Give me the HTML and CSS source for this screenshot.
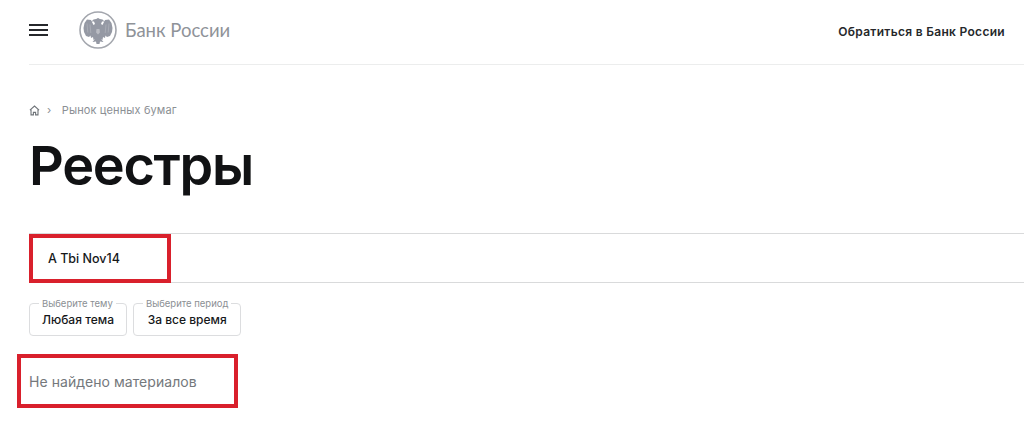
FILE: index.html
```html
<!DOCTYPE html>
<html lang="ru">
<head>
    <meta charset="UTF-8">
    <meta name="viewport" content="width=device-width, initial-scale=1.0">
    <title>Реестры</title>
    <link rel="stylesheet" href="styles.css">
</head>
<body>
    <div class="page">
        <header class="header">
            <div class="burger"><span></span><span></span><span></span></div>
            <div class="logo">
                <svg class="logo-mark" viewBox="0 0 38 38" width="38" height="38">
                    <circle cx="19" cy="19" r="18" fill="none" stroke="#a3a6ad" stroke-width="1.6"/>
                    <g id="half">
                        <path fill="#9599a4" d="M19.500 7L17 8 14.500 8.500 12.500 10.500 15 10.500 16 13 14.500 14 12 9 8 8.500 5.500 12 4.500 17 5 21 7 25 10 26 11.500 24.500 12 27 14 26 14.500 29 16 28 13.500 31 17 30.500 17.500 33 19.500 33z"/>
                        <path fill="none" stroke="#fff" stroke-opacity=".3" stroke-width=".6" d="M8 12.500l.8 9M11 13.500l.8 8.500"/>
                    </g>
                    <use href="#half" transform="matrix(-1 0 0 1 38 0)"/>
                    <path fill="#fff" fill-opacity=".35" d="M17.500 18h3l.4 3.500-1.900 2-1.900-2z"/>
                </svg>
                <span class="logo-text">Банк России</span>
            </div>
            <a class="contact">Обратиться в Банк России</a>
        </header>

        <nav class="crumbs">
            <svg viewBox="0 0 12 12" width="11" height="11">
                <path fill="none" stroke="#6f7479" stroke-width="1.2" d="M1 5.600L6 1.200l5 4.400M2.200 4.800v6h2.600V8h2.400v2.800h2.600v-6"/>
            </svg>
            <span class="crumb-sep">›</span>
            <span>Рынок ценных бумаг</span>
        </nav>

        <h1 class="title">Реестры</h1>

        <div class="tabs">
            <div class="tab">A Tbi Nov14</div>
        </div>

        <div class="filters">
            <div class="filter">
                <span class="filter-label">Выберите тему</span>
                <span class="filter-value">Любая тема</span>
            </div>
            <div class="filter">
                <span class="filter-label">Выберите период</span>
                <span class="filter-value">За все время</span>
            </div>
        </div>

        <p class="empty">Не найдено материалов</p>

        <div class="mark mark-tab"></div>
        <div class="mark mark-empty"></div>
    </div>
</body>
</html>
```

FILE: styles.css
```css
html, body {
    margin: 0;
    background: #fff;
    overflow: hidden;
}

body {
    font-family: Inter, "Noto Sans", sans-serif;
    color: #16181a;
}

.page {
    position: relative;
    height: 433px;
    padding-left: 29px;
}

.header {
    display: flex;
    align-items: center;
    height: 60px;
    padding-right: 19px;
    padding-bottom: 4px;
    border-bottom: 1px solid #eceded;
}

.burger {
    display: flex;
    flex-direction: column;
    gap: 3.5px;
    width: 19px;
    margin-right: 31px;
}

.burger span {
    height: 1.5px;
    background: #26282b;
}

.logo {
    display: flex;
    align-items: center;
    gap: 8px;
}

.logo-text {
    font-family: Lato, sans-serif;
    font-size: 18.5px;
    color: #8f9399;
}

.contact {
    margin-left: auto;
    margin-top: 2px;
    font-size: 12px;
    font-weight: 600;
    letter-spacing: 0.3px;
    color: #26282b;
}

.crumbs {
    display: flex;
    align-items: center;
    gap: 7px;
    margin-top: 38px;
    height: 14px;
    font-size: 11px;
    letter-spacing: 0.12px;
    color: #8b8f94;
}

.crumb-sep {
    margin-right: 3.500px;
}

.title {
    margin: 16px 0 0;
    height: 66px;
    font-size: 54px;
    line-height: 66px;
    font-weight: 600;
    letter-spacing: -1.3px;
    color: #111214;
}

.tabs {
    margin-top: 34px;
    height: 48px;
    border-top: 1px solid #d9dadb;
    border-bottom: 1px solid #d9dadb;
}

.tab {
    padding-left: 19px;
    font-size: 12.5px;
    font-weight: 500;
    line-height: 50px;
}

.filters {
    display: flex;
    gap: 6px;
    margin-top: 20px;
}

.filter {
    display: flex;
    flex-direction: column;
    height: 31px;
    padding: 0 12px;
    border: 1px solid #dcdddf;
    border-radius: 4px;
}

.filter-label {
    align-self: flex-start;
    margin: -6px -3px 0;
    padding: 0 3px;
    background: #fff;
    font-size: 9.5px;
    line-height: 11px;
    color: #8b8f94;
    white-space: nowrap;
}

.filter-value {
    font-size: 12px;
    font-weight: 500;
    line-height: 22px;
    text-align: center;
}

.empty {
    margin: 38px 0 0;
    font-size: 14px;
    letter-spacing: 0.05px;
    line-height: 16px;
    color: #74787c;
}

.mark {
    position: absolute;
    border: 4px solid #d9202c;
    box-sizing: border-box;
}

.mark-tab {
    left: 29px;
    top: 234px;
    width: 142px;
    height: 49px;
}

.mark-empty {
    left: 17px;
    top: 354px;
    width: 221px;
    height: 54px;
}
```
